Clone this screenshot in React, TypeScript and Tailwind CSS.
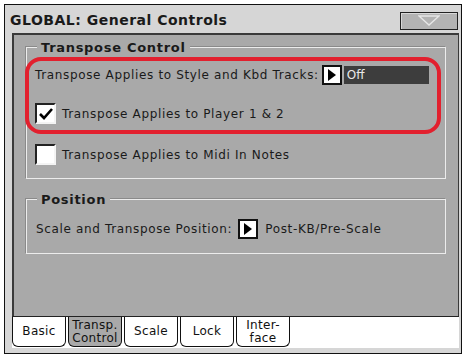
import React from "react";

const font = { fontFamily: '"DejaVu Sans", "Liberation Sans", sans-serif' };

function ArrowBtn() {
  return (
    <div className="flex h-[20px] w-[20px] shrink-0 items-center justify-center border-2 border-[#111] bg-white">
      <svg width="10" height="12" viewBox="0 0 10 12">
        <polygon points="1,0 9,6 1,12" fill="#000" />
      </svg>
    </div>
  );
}

function Check({ checked }: { checked?: boolean }) {
  return (
    <div className="flex h-[21px] w-[21px] shrink-0 items-center justify-center border-2 border-t-[#222] border-l-[#222] border-r-[#f4f4f4] border-b-[#f4f4f4] bg-white">
      {checked && (
        <svg width="16" height="14" viewBox="0 0 16 14">
          <polyline points="2,7 6,11 14,2" fill="none" stroke="#000" strokeWidth="2.6" />
        </svg>
      )}
    </div>
  );
}

function Tab({ label, active }: { label: React.ReactNode; active?: boolean }) {
  return (
    <div
      className={`flex h-[30px] w-[54px] items-center justify-center rounded-b-[6px] border border-t-0 border-[#111] text-center text-[12px] leading-[13px] tracking-[0.3px] text-[#111] ${
        active ? "bg-[#a9a9a9]" : "bg-white"
      }`}
    >
      {label}
    </div>
  );
}

function Group({ title, className, children }: { title: string; className: string; children: React.ReactNode }) {
  return (
    <div className={`relative shrink-0 border border-[#ececec] shadow-[-1px_-1px_0_#8a8a8a] ${className}`}>
      <div className="absolute -top-[9px] left-[10px] bg-[#a9a9a9] px-[4px] text-[13px] font-bold leading-[17px] tracking-[0.7px]">
        {title}
      </div>
      {children}
    </div>
  );
}

export default function App() {
  return (
    <div className="h-[359px] w-[465px] bg-white pl-[4px] pr-[3px] pt-[4px] pb-[5px]" style={font}>
      <div className="flex h-full w-full flex-col border border-[#111] bg-[#d6d6d6]">
        {/* header */}
        <div className="flex h-[28px] shrink-0 items-center justify-between pl-[5px] pr-[3px]">
          <span className="pt-[2px] text-[14px] font-bold tracking-[0.5px] text-[#1a1a1a]">GLOBAL: General Controls</span>
          <div className="mt-[3px] flex h-[18px] w-[58px] items-center justify-center border border-[#222] bg-[#b3b3b3] shadow-[inset_1px_1px_0_#d8d8d8]">
            <svg width="22" height="11" viewBox="0 0 22 11">
              <polygon points="1,1 21,1 11,10" fill="none" stroke="#e6e6e6" strokeWidth="1.4" />
            </svg>
          </div>
        </div>
        {/* panel */}
        <div className="ml-[7px] mr-[2px] flex flex-1 flex-col border-l-2 border-t-2 border-r border-[#3a3a3a] bg-[#a9a9a9] px-[12px] pt-[12px] text-[12px] text-[#1a1a1a]">
          <Group title="Transpose Control" className="h-[132px] pt-[9px]">
            <div className="-ml-[2px] mr-[4px] rounded-[16px] border-4 border-[#e2202e] pb-[6px] pl-[6px] pt-[4px]">
              <div className="flex h-[20px] items-center">
                <span className="tracking-[0.65px]">Transpose Applies to Style and Kbd Tracks:</span>
                <div className="ml-[3px]">
                  <ArrowBtn />
                </div>
                <div className="ml-[2px] flex h-[18px] w-[85px] items-center bg-[#3d3d3d] pl-[3px] text-[#e8e8e8]">Off</div>
              </div>
              <div className="mt-[18px] flex h-[21px] items-center">
                <Check checked />
                <span className="ml-[6px] tracking-[0.65px]">Transpose Applies to Player 1 &amp; 2</span>
              </div>
            </div>
            <div className="mt-[10px] flex h-[21px] items-center pl-[8px]">
              <Check />
              <span className="ml-[6px] tracking-[0.65px]">Transpose Applies to Midi In Notes</span>
            </div>
          </Group>
          <Group title="Position" className="mt-[20px] h-[55px] pl-[9px] pt-[19px]">
            <div className="flex h-[20px] items-center">
              <span className="tracking-[0.65px]">Scale and Transpose Position:</span>
              <div className="ml-[6px]">
                <ArrowBtn />
              </div>
              <span className="ml-[7px] tracking-[0.65px]">Post-KB/Pre-Scale</span>
            </div>
          </Group>
        </div>
        {/* tabs */}
        <div className="ml-[7px] mr-[2px] flex h-[32px] shrink-0 gap-[2px] border-t border-[#222] bg-white">
          <Tab label="Basic" />
          <Tab label={<span>Transp.<br />Control</span>} active />
          <Tab label="Scale" />
          <Tab label="Lock" />
          <Tab label={<span>Inter-<br />face</span>} />
        </div>
        <div className="h-[5px] shrink-0" />
      </div>
    </div>
  );
}
